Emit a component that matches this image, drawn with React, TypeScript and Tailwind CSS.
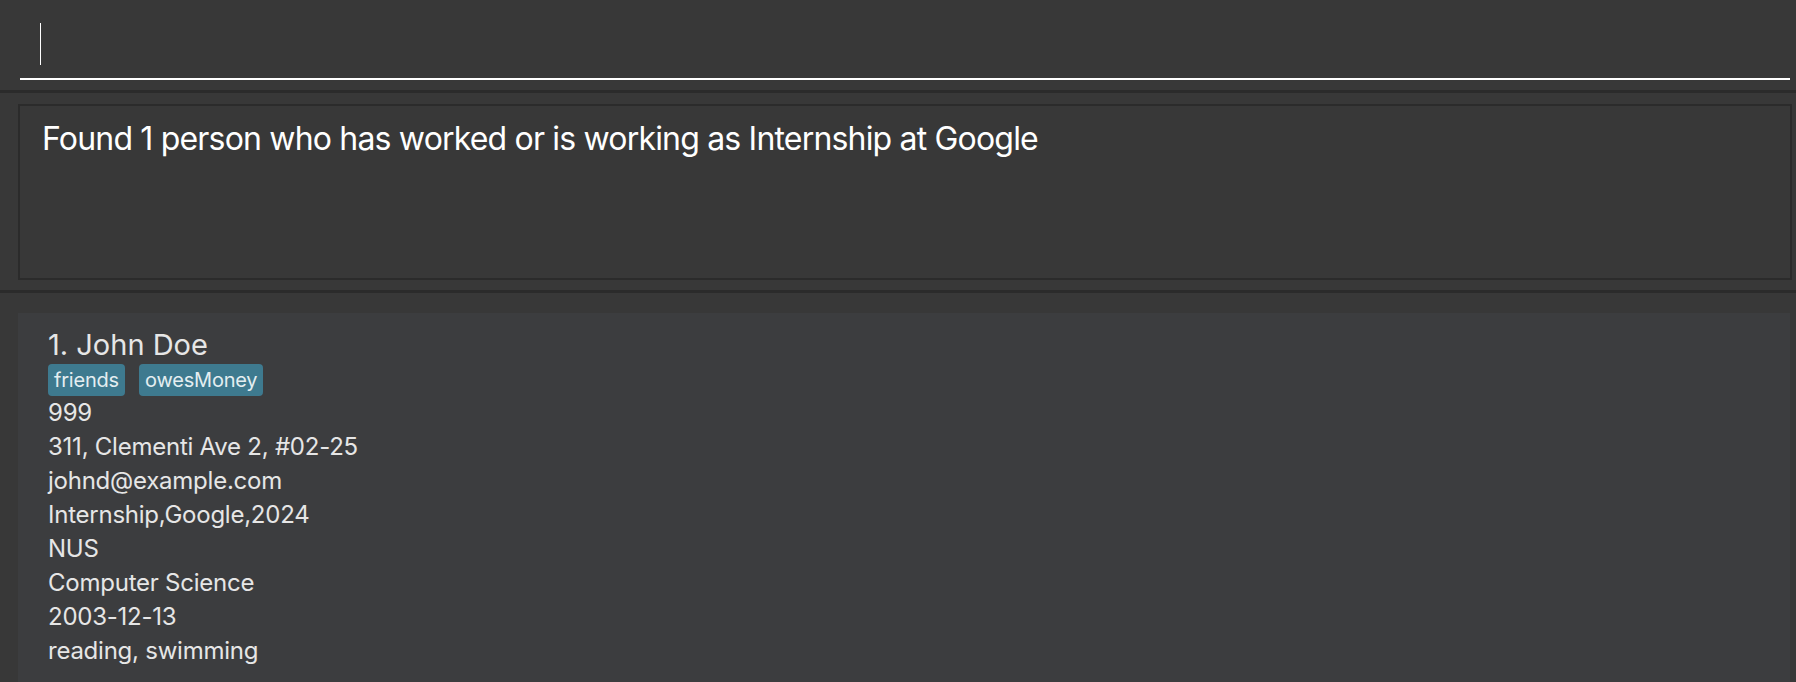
import React from "react";

const FONT = "font-['Inter','Noto_Sans',sans-serif]";

export default function App() {
  const details = [
    "999",
    "311, Clementi Ave 2, #02-25",
    "johnd@example.com",
    "Internship,Google,2024",
    "NUS",
    "Computer Science",
    "2003-12-13",
    "reading, swimming",
  ];
  return (
    <div className={`w-[1796px] h-[682px] overflow-hidden bg-[#383838] flex flex-col ${FONT}`}>
      {/* command box */}
      <div className="h-[90px] shrink-0 pl-[20px] pr-[6px]">
        <div className="h-[80px] border-b-2 border-white pl-[20px] pt-[23px]">
          <div className="w-px h-[42px] bg-white" />
        </div>
      </div>
      <div className="h-[3px] shrink-0 bg-[#2b2b2b]" />
      {/* result display */}
      <div className="h-[197px] shrink-0 pl-[18px] pr-[4px] pt-[11px] pb-[10px]">
        <div className="h-full border-2 border-[#2b2b2b] bg-[#383838] pl-[22px] pt-[13px]">
          <div className="text-[32px] leading-[40px] text-white tracking-[-0.0255em]">
            Found 1 person who has worked or is working as Internship at Google
          </div>
        </div>
      </div>
      <div className="h-[3px] shrink-0 bg-[#2b2b2b]" />
      {/* list */}
      <div className="flex-1 pl-[18px] pr-[6px] pt-[20px]">
        <div className="h-full bg-[#3c3d3f] pl-[30px] pt-[13px] text-[#e6e6e6]">
          <div className="text-[29px] leading-[38px]">1. John Doe</div>
          <div className="flex gap-[14px]">
            <span className="h-[32px] px-[6px] rounded-[4px] bg-[#3e7a8f] text-[#e4eef1] text-[20px] leading-[32px] tracking-[-0.01em]">
              friends
            </span>
            <span className="h-[32px] px-[6px] rounded-[4px] bg-[#3e7a8f] text-[#e4eef1] text-[20px] leading-[32px] tracking-[-0.01em]">
              owesMoney
            </span>
          </div>
          <div className="flex flex-col">
            {details.map((d) => (
              <div key={d} className="text-[24px] leading-[34px] tracking-[-0.01em]">
                {d}
              </div>
            ))}
          </div>
        </div>
      </div>
    </div>
  );
}
